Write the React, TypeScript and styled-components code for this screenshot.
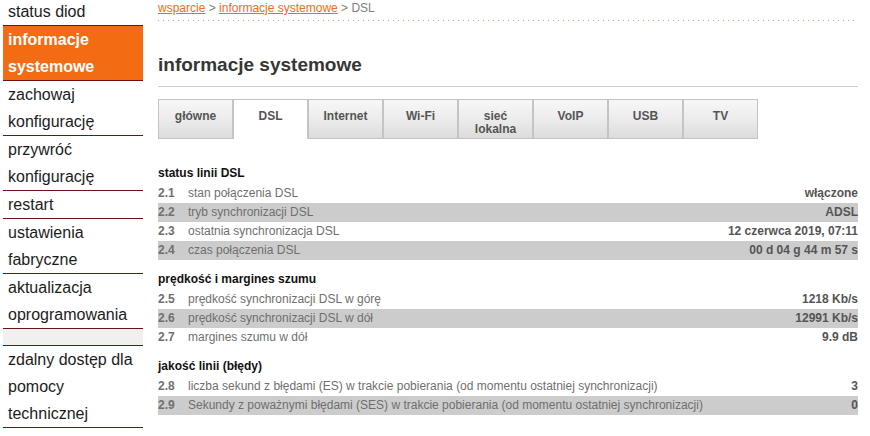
import React from 'react'
import styled, { createGlobalStyle } from 'styled-components'

const GlobalStyle = createGlobalStyle`
  body {
    margin: 0;
    background: #fff;
    font-family: "Liberation Sans", Arial, sans-serif;
  }
`

const Page = styled.div`
  display: flex;
  align-items: flex-start;
`

const Sidebar = styled.nav`
  width: 140px;
  margin-left: 3px;
  margin-top: -2px;
  display: flex;
  flex-direction: column;
`

const MenuItem = styled.div<{ active?: boolean }>`
  padding-left: 5px;
  font-size: 16px;
  line-height: 27px;
  color: ${({ active }) => (active ? '#fff' : '#1c1c1c')};
  font-weight: ${({ active }) => (active ? 'bold' : 'normal')};
  background: ${({ active }) => (active ? '#f36c14' : 'transparent')};
  border-bottom: 1px solid #6e1313;
`

const MenuSpacer = styled.div`
  height: 16px;
  background: #f0f0f0;
  border-bottom: 1px solid #6e1313;
`

const Main = styled.main`
  width: 700px;
  margin-left: 15px;
`

const Breadcrumb = styled.div`
  font-size: 12px;
  line-height: 16px;
  color: #808080;
  padding-bottom: 4px;

  a {
    color: #f26b21;
    text-decoration: underline;
  }
`

const Dotted = styled.div`
  height: 1px;
  background-image: linear-gradient(to right, #f39a5c 1px, transparent 1px);
  background-size: 5px 1px;
`

const Title = styled.h1`
  margin: 32px 0 9px;
  font-size: 19px;
  line-height: 24px;
  font-weight: bold;
  color: #363636;
`

const Rule = styled.div`
  height: 1px;
  background: #cfcfcf;
`

const Tabs = styled.div`
  display: flex;
  margin-top: 12px;
`

const Tab = styled.div<{ active?: boolean }>`
  box-sizing: border-box;
  width: 75px;
  height: 40px;
  padding-top: 10px;
  text-align: center;
  font-size: 12px;
  line-height: 13px;
  font-weight: bold;
  color: #555;
  border: 1px solid #c4c4c4;
  border-bottom: ${({ active }) => (active ? 'none' : '1px solid #c4c4c4')};
  background: ${({ active }) =>
    active ? '#fff' : 'linear-gradient(to bottom, #f7f7f7 0%, #ececec 50%, #dcdcdc 100%)'};
`

const Section = styled.section`
  margin-top: 11px;

  &:first-of-type {
    margin-top: 26px;
  }
`

const SectionTitle = styled.div`
  font-size: 12px;
  line-height: 16px;
  font-weight: bold;
  color: #111;
  padding-bottom: 3px;
`

const Row = styled.div<{ shaded?: boolean }>`
  display: flex;
  height: 19px;
  line-height: 19px;
  font-size: 12px;
  background: ${({ shaded }) => (shaded ? '#cccccc' : 'transparent')};
`

const Num = styled.span`
  width: 30px;
  font-weight: bold;
  color: #707070;
`

const Label = styled.span`
  flex: 1;
  color: #6f6f6f;
`

const Value = styled.span`
  font-weight: bold;
  color: #555;
  text-align: right;
`

const menu = [
  { label: 'status diod' },
  { label: 'informacje systemowe', active: true },
  { label: 'zachowaj konfigurację' },
  { label: 'przywróć konfigurację' },
  { label: 'restart' },
  { label: 'ustawienia fabryczne' },
  { label: 'aktualizacja oprogramowania' },
]

const tabs = ['główne', 'DSL', 'Internet', 'Wi-Fi', 'sieć lokalna', 'VoIP', 'USB', 'TV']

const sections = [
  {
    title: 'status linii DSL',
    rows: [
      ['2.1', 'stan połączenia DSL', 'włączone'],
      ['2.2', 'tryb synchronizacji DSL', 'ADSL'],
      ['2.3', 'ostatnia synchronizacja DSL', '12 czerwca 2019, 07:11'],
      ['2.4', 'czas połączenia DSL', '00 d 04 g 44 m 57 s'],
    ],
  },
  {
    title: 'prędkość i margines szumu',
    rows: [
      ['2.5', 'prędkość synchronizacji DSL w górę', '1218 Kb/s'],
      ['2.6', 'prędkość synchronizacji DSL w dół', '12991 Kb/s'],
      ['2.7', 'margines szumu w dół', '9.9 dB'],
    ],
  },
  {
    title: 'jakość linii (błędy)',
    rows: [
      ['2.8', 'liczba sekund z błędami (ES) w trakcie pobierania (od momentu ostatniej synchronizacji)', '3'],
      ['2.9', 'Sekundy z poważnymi błędami (SES) w trakcie pobierania (od momentu ostatniej synchronizacji)', '0'],
    ],
  },
]

// menu labels that wrap onto a second line at the first space
const splitLabel = (label: string) => {
  if (label === 'status diod' || !label.includes(' ')) return label
  const [first, ...rest] = label.split(' ')
  return (
    <>
      {first}
      <br />
      {rest.join(' ')}
    </>
  )
}

const App: React.FC = () => {
  return (
    <>
      <GlobalStyle />
      <Page>
        <Sidebar>
          {menu.map((m) => (
            <MenuItem key={m.label} active={m.active}>
              {splitLabel(m.label)}
            </MenuItem>
          ))}
          <MenuSpacer />
          <MenuItem>
            zdalny dostęp dla
            <br />
            pomocy
            <br />
            technicznej
          </MenuItem>
        </Sidebar>
        <Main>
          <Breadcrumb>
            <a>wsparcie</a> &gt; <a>informacje systemowe</a> &gt; DSL
          </Breadcrumb>
          <Dotted />
          <Title>informacje systemowe</Title>
          <Rule />
          <Tabs>
            {tabs.map((t) => (
              <Tab key={t} active={t === 'DSL'}>
                {t === 'sieć lokalna' ? (
                  <>sieć<br />lokalna</>
                ) : (
                  t
                )}
              </Tab>
            ))}
          </Tabs>
          {sections.map((s) => (
            <Section key={s.title}>
              <SectionTitle>{s.title}</SectionTitle>
              {s.rows.map((r, i) => (
                <Row key={r[0]} shaded={i % 2 === 1}>
                  <Num>{r[0]}</Num>
                  <Label>{r[1]}</Label>
                  <Value>{r[2]}</Value>
                </Row>
              ))}
            </Section>
          ))}
        </Main>
      </Page>
    </>
  )
}

export default App
